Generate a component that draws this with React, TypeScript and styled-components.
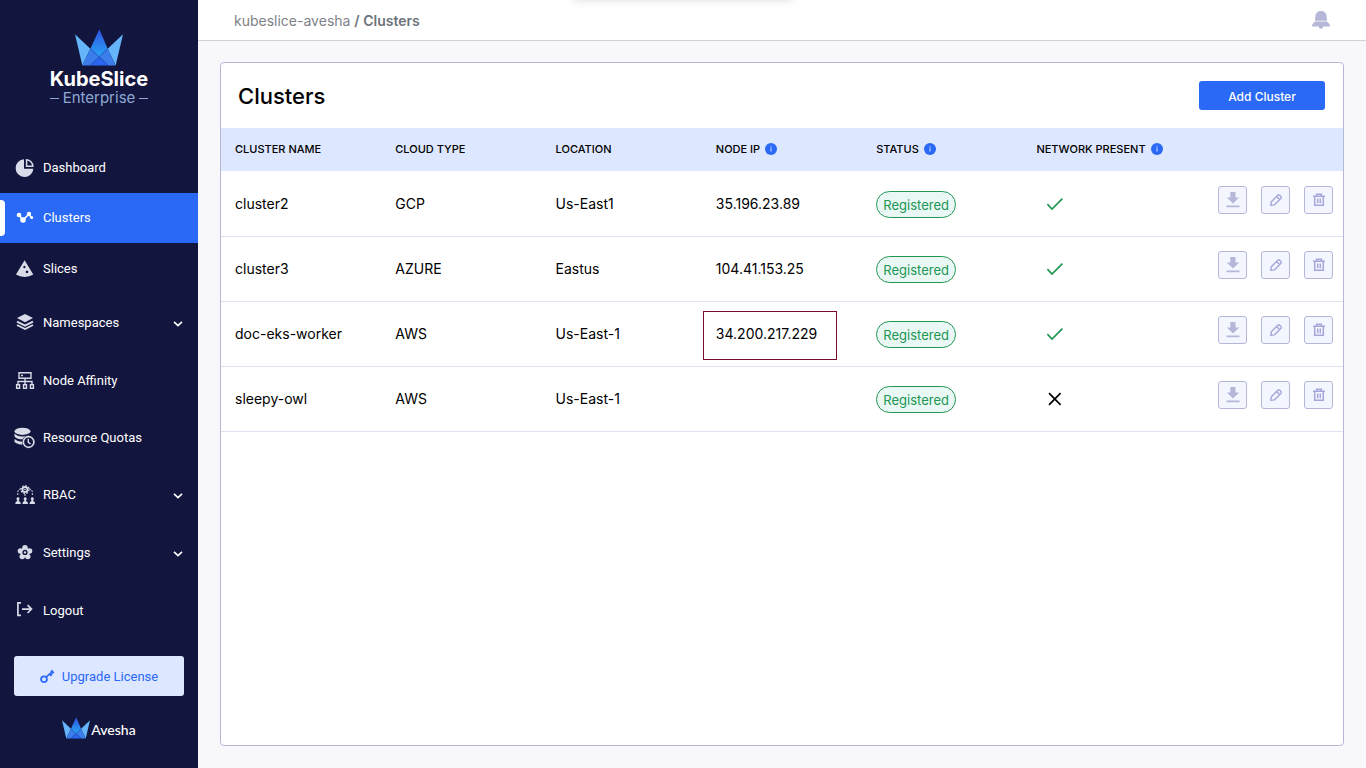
import React from "react";
import styled, { createGlobalStyle } from "styled-components";

const GlobalStyle = createGlobalStyle`
  *, *::before, *::after { box-sizing: border-box; }
  body {
    margin: 0;
    background: #f8f8fb;
    color: #000;
    font-family: Inter, "Liberation Sans", sans-serif;
    font-size: 14px;
  }
  button { font-family: inherit; cursor: pointer; }
  a { color: inherit; text-decoration: none; }
  svg { display: block; flex: none; }
`;

const Shell = styled.div`
  position: relative;
  display: grid;
  grid-template-columns: 198px minmax(0, 1fr);
  min-height: 100vh;
`;

/* Toast holder parked above the window; only its soft shadow shows. */
const ToastShadow = styled.div`
  position: absolute;
  bottom: 100%;
  left: 50%;
  width: 220px;
  height: 20px;
  margin-left: -110px;
  box-shadow: 0 0 10px rgba(0, 0, 0, 0.14);
  pointer-events: none;
`;

const Sidebar = styled.aside`
  display: flex;
  flex-direction: column;
  background: #12153d;
  color: #fff;
`;

const Brand = styled.div`
  display: flex;
  flex-direction: column;
  align-items: center;
  height: 143px;
  padding-top: 29px;
`;

const BrandName = styled.div`
  margin-top: 3px;
  font-size: 20px;
  line-height: 20px;
  font-weight: 700;
`;

const BrandEdition = styled.div`
  display: flex;
  align-items: center;
  gap: 4px;
  color: #8ea9d6;
  font-size: 15px;
  line-height: 18px;

  &::before, &::after {
    content: "";
    width: 9px;
    height: 1px;
    background: currentColor;
  }
`;

const NavLink = styled.a<{ $size: number; $active?: boolean }>`
  position: relative;
  display: flex;
  align-items: center;
  gap: 8px;
  height: ${(p) => p.$size}px;
  padding: 0 15px;
  background: ${(p) => (p.$active ? "#2a69f5" : "transparent")};
  font-family: Roboto, sans-serif;
  font-size: 13px;
  line-height: 20px;

  ${(p) =>
    p.$active &&
    `&::before {
      content: "";
      position: absolute;
      left: 0;
      top: 7px;
      width: 5px;
      height: 36px;
      border-radius: 0 4px 4px 0;
      background: #fff;
    }`}
`;

const NavIcon = styled.span`
  display: flex;
  justify-content: center;
  width: 20px;
  color: #d9dbe8;
`;

const NavLabel = styled.span`
  flex: 1;
`;

const UpgradeButton = styled.button`
  display: flex;
  align-items: center;
  justify-content: center;
  gap: 7px;
  height: 40px;
  margin: 17px 14px 0;
  border: 0;
  border-radius: 3px;
  background: #dde7ff;
  color: #2a69f5;
  font-family: Roboto, sans-serif;
  font-size: 13px;
`;

const Vendor = styled.div`
  display: flex;
  align-items: flex-end;
  justify-content: center;
  gap: 1px;
  margin-top: 21px;
  font-family: Lato, sans-serif;
  font-size: 14px;
  line-height: 18px;
  font-weight: 500;
`;

const Content = styled.div`
  display: flex;
  flex-direction: column;
`;

const TopBar = styled.header`
  display: flex;
  align-items: center;
  justify-content: space-between;
  height: 41px;
  padding: 0 36px;
  border-bottom: 1px solid #cfd0da;
  background: #fff;
`;

const Breadcrumb = styled.nav`
  padding-top: 1px;
  color: #7d8187;
  font-size: 14px;
  line-height: 20px;
`;

const Crumb = styled.span`
  color: #6d737a;
  font-weight: 600;
`;

const BellButton = styled.button`
  padding: 0;
  border: 0;
  background: none;
  color: #b5b6d8;
`;

const Card = styled.main`
  flex: 1;
  margin: 21px 22px 22px;
  border: 1px solid #b5b6d8;
  border-radius: 4px;
  background: #fff;
`;

const CardHeader = styled.div`
  display: flex;
  align-items: center;
  justify-content: space-between;
  height: 65px;
  padding: 0 18px 0 17px;
`;

const Title = styled.h1`
  margin: 0;
  font-size: 22px;
  line-height: 28px;
  font-weight: 500;
`;

const AddButton = styled.button`
  width: 126px;
  height: 29px;
  padding: 2px 0 0;
  border: 0;
  border-radius: 3px;
  background: #2a69f5;
  color: #fff;
  font-size: 12px;
  font-weight: 500;
`;

const Table = styled.table`
  width: 100%;
  table-layout: fixed;
  border-collapse: separate;
  border-spacing: 0;
`;

const HeadCell = styled.th`
  height: 44px;
  padding: 0 0 1px 14px;
  border-bottom: 1px solid #fff;
  background: #dde7ff;
  font-size: 11px;
  font-weight: 500;
  text-align: left;
`;

const HeadLabel = styled.span`
  display: flex;
  align-items: center;
  gap: 5px;
  white-space: nowrap;
`;

const Cell = styled.td`
  position: relative;
  height: 65px;
  padding: 0 0 0 14px;
  border-bottom: 1px solid #dce2f0;
  font-size: 14px;
  line-height: 20px;
`;

const ActionCell = styled(Cell)`
  padding: 0 10px 8px 0;
`;

const Highlight = styled.span`
  position: absolute;
  left: 1px;
  top: 9px;
  width: 134px;
  height: 49px;
  border: 1px solid #7a0a28;
  pointer-events: none;
`;

const Badge = styled.span`
  display: inline-flex;
  align-items: center;
  justify-content: center;
  width: 80px;
  height: 27px;
  padding-top: 2px;
  border: 1px solid #219653;
  border-radius: 14px;
  background: #e9f8f5;
  color: #219653;
  font-size: 13px;
  vertical-align: middle;
`;

const Presence = styled.div`
  padding: 0 0 0 10px;
`;

const Actions = styled.div`
  display: flex;
  justify-content: flex-end;
  gap: 14px;
`;

const IconButton = styled.button`
  display: flex;
  align-items: center;
  justify-content: center;
  width: 29px;
  height: 28px;
  padding: 0;
  border: 1px solid #b5b6d8;
  border-radius: 3px;
  background: #f3f6ff;
  color: #b5b6d8;
`;

function Crown({ id, width, height }: { id: string; width: number; height: number }) {
  return (
    <svg width={width} height={height} viewBox="0 0 144 110" aria-hidden="true">
      <defs>
        <linearGradient id={id} x1="0" y1="0" x2="0" y2="1">
          <stop offset="0" stopColor="#2f4fe0" />
          <stop offset="1" stopColor="#28a6f6" />
        </linearGradient>
      </defs>
      <path d="M0 15 46 59 22 109Z" fill="#64b5fa" />
      <path d="M144 15 98 59 122 109Z" fill="#64b5fa" />
      <path d="M73 0 98 59 73 83 46 59Z" fill={`url(#${id})`} />
      <path d="M46 59 73 83 45 109H22Z" fill="#3a7deb" />
      <path d="M98 59 73 83 100 109H122Z" fill="#3a7deb" />
      <path d="M73 83 45 109H100Z" fill="#2a66ef" />
      <path d="M46 59 100 109M98 59 45 109" stroke="#2453c4" strokeWidth="2" fill="none" />
    </svg>
  );
}

const DashboardIcon = () => (
  <svg width="20" height="20" viewBox="0 0 20 20">
    <path d="M9 1.2A8.9 8.9 0 1 0 18.4 10.8H9Z" fill="currentColor" />
    <path d="M11.6 1.8v6.4h6.2A6.6 6.6 0 0 0 11.6 1.8Z" fill="none" stroke="currentColor" strokeWidth="1.5" />
  </svg>
);

const ClustersIcon = () => (
  <svg width="20" height="20" viewBox="0 0 20 20">
    <path d="M4 7 8 12 14 6 16.5 10" fill="none" stroke="#fff" strokeWidth="1.6" />
    <g fill="#fff">
      <circle cx="4" cy="7" r="2.3" />
      <circle cx="8" cy="12" r="2.8" />
      <circle cx="14" cy="6" r="2.2" />
      <circle cx="16.7" cy="9.6" r="1.5" />
    </g>
  </svg>
);

const SlicesIcon = () => (
  <svg width="20" height="20" viewBox="0 0 20 20">
    <path
      fillRule="evenodd"
      fill="currentColor"
      d="M9.6 1.2 18.3 15.6Q14.5 18 9.6 18T1 15.6ZM9.4 6.8a1.2 1.2 0 1 0 .01 0ZM12 11.6a1.3 1.3 0 1 0 .01 0Z"
    />
  </svg>
);

const LayersIcon = () => (
  <svg width="20" height="20" viewBox="0 0 20 20">
    <path d="M10 1 18 5 10 9.2 2 5Z" fill="currentColor" />
    <path d="M2 8.6 10 12.6 18 8.6M2 12 10 16 18 12" fill="none" stroke="currentColor" strokeWidth="1.9" />
  </svg>
);

const NodeIcon = () => (
  <svg width="20" height="20" viewBox="0 0 20 20" fill="none" stroke="currentColor" strokeWidth="1.4">
    <path d="M4 1.7H16V7.3H4ZM6 4.5H8M10 7.5V13.5M3 13.5V10.5H17V13.5M1.6 13.7H4.6V17.2H1.6ZM8.5 13.7H11.5V17.2H8.5ZM15.4 13.7H18.4V17.2H15.4Z" />
  </svg>
);

const QuotaIcon = () => (
  <svg width="22" height="22" viewBox="0 0 22 22">
    <ellipse cx="8.5" cy="4.3" rx="8" ry="3.6" fill="currentColor" />
    <path d="M.5 6.5Q3.5 9.5 8.5 9.4T15 8.2Q10 9 8.7 12.3 3 12.2.5 9.4ZM.5 12Q3.5 14.6 8 14.7L8.6 17.6Q3 17.3.5 14.9Z" fill="currentColor" />
    <circle cx="14.6" cy="15" r="5.3" fill="none" stroke="currentColor" strokeWidth="1.7" />
    <path d="M14.3 11.7V15.3L16.6 17" fill="none" stroke="currentColor" strokeWidth="1.4" />
  </svg>
);

const RbacIcon = () => (
  <svg width="20" height="20" viewBox="0 0 20 20">
    <circle cx="10" cy="4.6" r="2.6" fill="none" stroke="currentColor" strokeWidth="1.8" />
    <circle cx="10" cy="4.6" r="4" fill="none" stroke="currentColor" strokeWidth="1.2" strokeDasharray="1.6 1.5" />
    <circle cx="10" cy="4.6" r=".8" fill="currentColor" />
    <path d="M6 3.8Q2.8 4.2 2.8 7.6V10M14 3.8Q17.3 4.2 17.3 7.6V10M10 9V12" fill="none" stroke="currentColor" strokeDasharray="2 1" />
    {[3, 10.2, 17.3].map((x) => (
      <path
        key={x}
        transform={`translate(${x} 0)`}
        d="M0 12.2a1.6 1.6 0 0 1 1 2.8L.8 16Q2.8 16.4 2.8 19H-2.8Q-2.8 16.4-.8 16L-1 15A1.6 1.6 0 0 1 0 12.2Z"
        fill="currentColor"
      />
    ))}
  </svg>
);

const SettingsIcon = () => (
  <svg width="20" height="20" viewBox="0 0 20 20">
    <g fill="currentColor">
      <circle cx="10" cy="4.6" r="2.7" />
      <circle cx="14.6" cy="8" r="2.7" />
      <circle cx="12.8" cy="13.6" r="2.7" />
      <circle cx="7.2" cy="13.6" r="2.7" />
      <circle cx="5.4" cy="8" r="2.7" />
      <circle cx="10" cy="9.4" r="4.8" />
    </g>
    <circle cx="10" cy="9.4" r="1.9" fill="none" stroke="#12153d" strokeWidth="1.4" />
  </svg>
);

const LogoutIcon = () => (
  <svg width="20" height="20" viewBox="0 0 20 20" fill="none" stroke="currentColor" strokeWidth="1.7">
    <path d="M6 1.8H2.9V14.4H6M7 8.1H16.3M12.6 4.2 16.5 8.1 12.6 12" />
  </svg>
);

const ChevronIcon = () => (
  <svg width="10" height="10" viewBox="0 0 10 10" fill="none" stroke="#fff" strokeWidth="1.6">
    <path d="M1 3.9 5 7.7 9 3.9" />
  </svg>
);

const KeyIcon = () => (
  <svg width="15" height="15" viewBox="0 0 15 15" fill="none" stroke="currentColor">
    <circle cx="4" cy="10.3" r="2.9" strokeWidth="1.8" />
    <path d="M6 8.2 12.6 2.6" strokeWidth="1.7" />
    <path d="M9.6 4.4 11.8 6.6M11.2 1.6 13.6 4.2" strokeWidth="2.2" />
  </svg>
);

const BellIcon = () => (
  <svg width="18" height="18" viewBox="0 0 18 18" fill="currentColor">
    <path d="M9 0C5.4 0 3.4 2.6 3.3 6L3 9.8H15L14.7 6C14.6 2.6 12.6 0 9 0ZM3 10.6H15L17.8 13.6V15.4H.2V13.6ZM6.8 15.4H11.2A2.2 2.4 0 0 1 6.8 15.4Z" />
  </svg>
);

const InfoIcon = () => (
  <svg width="12" height="12" viewBox="0 0 12 12" role="img" aria-label="More information">
    <circle cx="6" cy="6" r="6" fill="#2a69f5" />
    <path d="M6 3.3V4.4M6 5.3V8.6" stroke="#c9d9ff" strokeWidth="1.1" />
  </svg>
);

const CheckIcon = () => (
  <svg width="18" height="14" viewBox="0 0 18 14" fill="none" stroke="#219653" strokeWidth="1.7" role="img" aria-label="Present">
    <path d="M1.4 7.2 6 12 16.4 1.7" />
  </svg>
);

const CrossIcon = () => (
  <svg width="18" height="14" viewBox="0 0 18 14" fill="none" stroke="#000" strokeWidth="1.7" role="img" aria-label="Not present">
    <path d="M3 1.2 14.6 12.8M14.6 1.2 3 12.8" />
  </svg>
);

const DownloadIcon = () => (
  <svg width="14" height="16" viewBox="0 0 14 16" fill="currentColor">
    <path d="M4.3 0H9.5V5.6H13.2L7 11.6.8 5.6H4.3ZM.5 13.4H13.5V15.2H.5Z" />
  </svg>
);

const PencilIcon = () => (
  <svg width="14" height="14" viewBox="0 0 14 14" fill="none" stroke="#a5a6da" strokeWidth="1.4" strokeLinejoin="round">
    <path d="M1.8 12.3 2.3 8.8 8.8 2.2Q9.7 1.4 10.6 2.2L12 3.6Q12.7 4.5 12 5.3L5.3 11.9ZM7.6 3.6 10.5 6.6" />
  </svg>
);

const TrashIcon = () => (
  <svg width="14" height="14" viewBox="0 0 14 14" fill="none" stroke="#a5a6da" strokeWidth="1.5">
    <path d="M1 3.2H13M4.6 3V1.3H9.4V3M2.7 3.4V12.2H11.3V3.4M5.7 5.5V10.3M8.3 5.5V10.3" />
  </svg>
);

const navItems = [
  { label: "Dashboard", size: 50, icon: <DashboardIcon /> },
  { label: "Clusters", size: 50, icon: <ClustersIcon />, active: true },
  { label: "Slices", size: 51, icon: <SlicesIcon /> },
  { label: "Namespaces", size: 58, icon: <LayersIcon />, expandable: true },
  { label: "Node Affinity", size: 57, icon: <NodeIcon /> },
  { label: "Resource Quotas", size: 57, icon: <QuotaIcon /> },
  { label: "RBAC", size: 58, icon: <RbacIcon />, expandable: true },
  { label: "Settings", size: 58, icon: <SettingsIcon />, expandable: true },
  { label: "Logout", size: 57, icon: <LogoutIcon /> },
];

const columns = [
  { label: "CLUSTER NAME" },
  { label: "CLOUD TYPE" },
  { label: "LOCATION" },
  { label: "NODE IP", info: true },
  { label: "STATUS", info: true },
  { label: "NETWORK PRESENT", info: true },
];

const clusters = [
  { name: "cluster2", cloud: "GCP", location: "Us-East1", ip: "35.196.23.89", network: true },
  { name: "cluster3", cloud: "AZURE", location: "Eastus", ip: "104.41.153.25", network: true },
  { name: "doc-eks-worker", cloud: "AWS", location: "Us-East-1", ip: "34.200.217.229", network: true, highlight: true },
  { name: "sleepy-owl", cloud: "AWS", location: "Us-East-1", ip: "", network: false },
];

export default function App() {
  return (
    <>
      <GlobalStyle />
      <Shell>
        <Sidebar>
          <Brand>
            <Crown id="brand-crown" width={48} height={37} />
            <BrandName>KubeSlice</BrandName>
            <BrandEdition>Enterprise</BrandEdition>
          </Brand>
          <nav aria-label="Main">
            {navItems.map((item) => (
              <NavLink key={item.label} href="#" $size={item.size} $active={item.active}>
                <NavIcon>{item.icon}</NavIcon>
                <NavLabel>{item.label}</NavLabel>
                {item.expandable && <ChevronIcon />}
              </NavLink>
            ))}
          </nav>
          <UpgradeButton type="button">
            <KeyIcon />
            Upgrade License
          </UpgradeButton>
          <Vendor>
            <Crown id="vendor-crown" width={28} height={22} />
            Avesha
          </Vendor>
        </Sidebar>
        <Content>
          <TopBar>
            <Breadcrumb aria-label="Breadcrumb">
              <a href="#">kubeslice-avesha</a> <Crumb>/ Clusters</Crumb>
            </Breadcrumb>
            <BellButton type="button" aria-label="Notifications">
              <BellIcon />
            </BellButton>
          </TopBar>
          <Card>
            <CardHeader>
              <Title>Clusters</Title>
              <AddButton type="button">Add Cluster</AddButton>
            </CardHeader>
            <Table>
              <thead>
                <tr>
                  {columns.map((column) => (
                    <HeadCell key={column.label} scope="col">
                      <HeadLabel>
                        {column.label}
                        {column.info && <InfoIcon />}
                      </HeadLabel>
                    </HeadCell>
                  ))}
                  <HeadCell scope="col" aria-label="Actions" />
                </tr>
              </thead>
              <tbody>
                {clusters.map((cluster) => (
                  <tr key={cluster.name}>
                    <Cell>{cluster.name}</Cell>
                    <Cell>{cluster.cloud}</Cell>
                    <Cell>{cluster.location}</Cell>
                    <Cell>
                      {cluster.ip}
                      {cluster.highlight && <Highlight />}
                    </Cell>
                    <Cell>
                      <Badge>Registered</Badge>
                    </Cell>
                    <Cell>
                      <Presence>{cluster.network ? <CheckIcon /> : <CrossIcon />}</Presence>
                    </Cell>
                    <ActionCell>
                      <Actions>
                        <IconButton type="button" aria-label={`Download ${cluster.name}`}>
                          <DownloadIcon />
                        </IconButton>
                        <IconButton type="button" aria-label={`Edit ${cluster.name}`}>
                          <PencilIcon />
                        </IconButton>
                        <IconButton type="button" aria-label={`Delete ${cluster.name}`}>
                          <TrashIcon />
                        </IconButton>
                      </Actions>
                    </ActionCell>
                  </tr>
                ))}
              </tbody>
            </Table>
          </Card>
        </Content>
        <ToastShadow />
      </Shell>
    </>
  );
}
